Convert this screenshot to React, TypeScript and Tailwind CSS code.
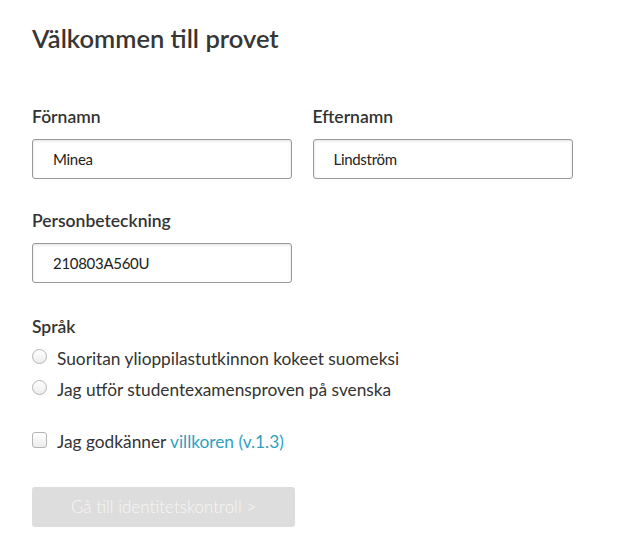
import React from 'react';

const Radio = () => (
  <span className="h-[15px] w-[15px] shrink-0 rounded-full border border-[#b4b4b4] bg-gradient-to-b from-[#ffffff] to-[#ececec]" />
);

const inputCls =
  'mt-3 h-10 w-[260px] rounded-[3px] border border-[#9a9a9a] px-5 text-[15px] tracking-[-0.3px] text-[#222] shadow-[inset_0_1px_3px_rgba(0,0,0,0.12)] outline-none';

const labelCls = 'block text-[17.5px] leading-[20px] font-semibold text-[#333]';

export default function App() {
  return (
    <div className="min-h-screen bg-white px-8 pt-6 text-[#333] font-['Lato','Noto_Sans',sans-serif]">
      <h1 className="text-[25.5px] leading-[28px] font-semibold text-[#363636]">
        {'V\u00e4lkommen till provet'}
      </h1>

      <div className="mt-[55px] grid w-[540px] grid-cols-2 gap-x-[21px]">
        <div>
          <label className={labelCls}>{'F\u00f6rnamn'}</label>
          <input readOnly value="Minea" className={inputCls} />
        </div>
        <div>
          <label className={labelCls}>Efternamn</label>
          <input readOnly value={'Lindstr\u00f6m'} className={inputCls} />
        </div>
      </div>

      <div className="mt-8">
        <label className={labelCls}>Personbeteckning</label>
        <input readOnly value="210803A560U" className={inputCls} />
      </div>

      <div className="mt-[34px]">
        <div className={labelCls}>{'Spr\u00e5k'}</div>
        <div className="mt-3 flex flex-col gap-[11px]">
          <label className="flex items-start gap-[10px] text-[17.3px] leading-[20px]">
            <Radio />
            <span>Suoritan ylioppilastutkinnon kokeet suomeksi</span>
          </label>
          <label className="flex items-start gap-[10px] text-[17.3px] leading-[20px]">
            <Radio />
            <span>{'Jag utf\u00f6r studentexamensproven p\u00e5 svenska'}</span>
          </label>
        </div>
      </div>

      <label className="mt-8 flex items-start gap-[10px] text-[17.3px] leading-[20px]">
        <span className="h-4 w-[15px] shrink-0 rounded-[3px] border border-[#b4b4b4] bg-gradient-to-b from-[#ffffff] to-[#ececec]" />
        <span>
          {'Jag godk\u00e4nner '}
          <a className="text-[#2f9fc0]">villkoren (v.1.3)</a>
        </span>
      </label>

      <button
        disabled
        className="mt-[35px] h-10 w-[263px] rounded-[3px] bg-[#dddddd] text-[17px] font-light text-[#f6f6f6]"
      >
        {'G\u00e5 till identitetskontroll >'}
      </button>
    </div>
  );
}
